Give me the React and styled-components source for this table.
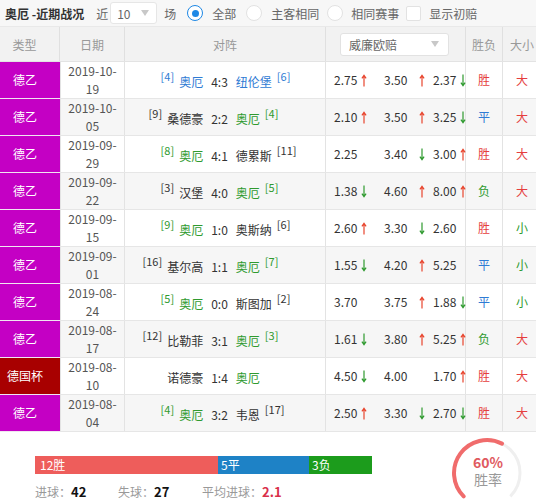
import React from 'react';
import styled, { createGlobalStyle } from 'styled-components';

const Global = createGlobalStyle`
  html, body { margin: 0; padding: 0; background: #fff; overflow: hidden; }
  body {
    font-family: "Noto Sans CJK SC", "Microsoft YaHei", sans-serif;
    font-size: 12px;
    color: #333;
  }
`;

const COLS = '60px 65px 201px 140px 37px 39px';

const Page = styled.div`
  width: 536px;
  height: 501px;
  overflow: hidden;
`;

const TopBar = styled.div`
  height: 27px;
  box-sizing: border-box;
  display: flex;
  align-items: center;
  padding-left: 5px;
  background: #f7f7f7;
  border-bottom: 1px solid #e9e9e9;
  white-space: nowrap;
`;

const Title = styled.span`
  font-weight: bold;
  color: #333;
  margin-right: 12px;
`;

const Plain = styled.span`
  color: #666;
`;

const MiniSelect = styled.div`
  width: 47px;
  height: 22px;
  box-sizing: border-box;
  margin: 0 7px 0 2px;
  border: 1px solid #e6e6e6;
  border-radius: 3px;
  background: #fff;
  display: flex;
  align-items: center;
  justify-content: space-between;
  padding: 0 7px 0 6px;
  color: #666;
`;

const Caret = styled.span`
  width: 0;
  height: 0;
  border-left: 4px solid transparent;
  border-right: 4px solid transparent;
  border-top: 6px solid #c8c8c8;
`;

const Option = styled.label`
  display: flex;
  align-items: center;
  gap: ${p => p.$gap || 9}px;
  margin-left: ${p => p.$ml || 10}px;
  color: #666;
`;

const Radio = styled.span`
  width: 16px;
  height: 16px;
  box-sizing: border-box;
  border-radius: 50%;
  border: 1px solid ${p => (p.$on ? '#1e88e5' : '#e2e2e2')};
  background: #fff;
  display: flex;
  align-items: center;
  justify-content: center;
  &::after {
    content: '';
    width: 7px;
    height: 7px;
    border-radius: 50%;
    background: ${p => (p.$on ? '#1e88e5' : 'transparent')};
  }
`;

const Check = styled.span`
  width: 15px;
  height: 15px;
  box-sizing: border-box;
  border: 1px solid #e2e2e2;
  border-radius: 2px;
  background: #fff;
`;

const HeadRow = styled.div`
  display: grid;
  grid-template-columns: ${COLS};
  height: 35px;
  box-sizing: border-box;
  background: #f2f2f2;
  border-bottom: 1px solid #e3e3e3;
`;

const HeadCell = styled.div`
  display: flex;
  align-items: center;
  justify-content: ${p => (p.$start ? 'flex-start' : 'center')};
  padding: 0 ${p => p.$pr || 0}px 0 ${p => p.$pl || 0}px;
  border-right: 1px solid #e0e0e0;
  color: #999;
`;

const OddsSelect = styled.div`
  width: 109px;
  height: 23px;
  box-sizing: border-box;
  border: 1px solid #e2e2e2;
  border-radius: 3px;
  background: #fff;
  display: flex;
  align-items: center;
  justify-content: space-between;
  padding: 0 9px 0 8px;
  color: #666;
`;

const Row = styled.div`
  display: grid;
  grid-template-columns: ${COLS};
  height: 37px;
  box-sizing: border-box;
  border-bottom: 1px solid #e6e6e6;
  background: ${p => (p.$alt ? '#f6f6f6' : '#fff')};
`;

const Cell = styled.div`
  display: flex;
  align-items: center;
  justify-content: center;
  border-right: 1px solid #e3e3e3;
  line-height: 18px;
`;

const TypeCell = styled(Cell)`
  background: ${p => p.$bg};
  color: #fff;
  border-right: none;
  padding-right: 10px;
  margin-bottom: -1px;
  border-bottom: 1px solid #f0e6f0;
`;

const DateCell = styled(Cell)`
  flex-direction: column;
  color: #555;
  border-left: 1px solid #e3e3e3;
`;

const MatchCell = styled(Cell)`
  display: grid;
  grid-template-columns: 1fr auto 1fr;
  align-items: center;
  padding-right: 11px;
`;

const Side = styled.div`
  display: flex;
  align-items: center;
  justify-content: ${p => (p.$home ? 'flex-end' : 'flex-start')};
  white-space: nowrap;
  padding-top: 3px;
`;

const Team = styled.span`
  color: ${p => p.$c};
`;

const Rank = styled.sup`
  font-size: 11px;
  line-height: 11px;
  color: ${p => p.$c};
  position: relative;
  top: -5px;
  vertical-align: baseline;
  margin: ${p => (p.$home ? '0 5px 0 0' : '0 0 0 5px')};
`;

const Score = styled.span`
  padding: 3px 8px 0;
  color: #333;
`;

const OddsCell = styled(Cell)`
  display: grid;
  grid-template-columns: 50px 49px auto;
  justify-content: start;
  padding-left: 8px;
`;

const Odd = styled.span`
  display: flex;
  align-items: center;
  color: #333;
`;

const ArrowSvg = styled.svg`
  margin-left: ${p => p.$ml}px;
  stroke: ${p => (p.$dir === 'up' ? '#e8452e' : '#2f9a2f')};
  fill: none;
  stroke-width: 1.2;
`;

const ResultCell = styled(Cell)`
  color: ${p => p.$c};
`;

const Summary = styled.div`
  display: flex;
  justify-content: space-between;
  height: 69px;
`;

const SummaryLeft = styled.div`
  padding: 24px 0 0 35px;
`;

const Bar = styled.div`
  display: flex;
  height: 18px;
`;

const Seg = styled.div`
  background: ${p => p.$bg};
  color: #fff;
  line-height: 18px;
  padding-left: ${p => p.$pl}px;
  box-sizing: border-box;
  white-space: nowrap;
`;

const Stats = styled.div`
  display: flex;
  margin-top: 9px;
  line-height: 18px;
  white-space: nowrap;
`;

const Stat = styled.span`
  color: #999;
  width: ${p => p.$w}px;
  & b {
    font-size: 13px;
    color: ${p => p.$c || '#111'};
    font-weight: bold;
  }
`;

const Gauge = styled.div`
  display: grid;
  width: 72px;
  height: 72px;
  margin: 5px 13px 0 0;
  & > * {
    grid-area: 1 / 1;
  }
`;

const GaugeText = styled.div`
  display: flex;
  flex-direction: column;
  align-items: center;
  justify-content: center;
  padding: 0 0 4px 2px;
`;

const Pct = styled.span`
  color: #e05a5f;
  font-size: 14px;
  line-height: 17px;
  font-weight: bold;
`;

const PctLabel = styled.span`
  color: #999;
  font-size: 14px;
  line-height: 17px;
`;

const GREEN = '#2f9a2f';
const BLUE = '#2f7bd4';
const RED = '#e53e3e';

const rows = [
  { t: '德乙', d: '2019-10-19', h: '奥厄', hr: 4, s: '4:3', a: '纽伦堡', ar: 6, o: [['2.75', 'up'], ['3.50', 'up'], ['2.37', 'down']], r: '胜', b: '大', hot: true },
  { t: '德乙', d: '2019-10-05', h: '桑德豪', hr: 9, s: '2:2', a: '奥厄', ar: 4, o: [['2.10', 'up'], ['3.50', 'up'], ['3.25', 'down']], r: '平', b: '大' },
  { t: '德乙', d: '2019-09-29', h: '奥厄', hr: 8, s: '4:1', a: '德累斯', ar: 11, o: [['2.25'], ['3.40', 'down'], ['3.00', 'up']], r: '胜', b: '大' },
  { t: '德乙', d: '2019-09-22', h: '汉堡', hr: 3, s: '4:0', a: '奥厄', ar: 5, o: [['1.38', 'down'], ['4.60', 'up'], ['8.00', 'up']], r: '负', b: '大' },
  { t: '德乙', d: '2019-09-15', h: '奥厄', hr: 9, s: '1:0', a: '奥斯纳', ar: 6, o: [['2.60', 'up'], ['3.30', 'down'], ['2.60']], r: '胜', b: '小' },
  { t: '德乙', d: '2019-09-01', h: '基尔高', hr: 16, s: '1:1', a: '奥厄', ar: 7, o: [['1.55', 'down'], ['4.20', 'up'], ['5.25']], r: '平', b: '小' },
  { t: '德乙', d: '2019-08-24', h: '奥厄', hr: 5, s: '0:0', a: '斯图加', ar: 2, o: [['3.70'], ['3.75', 'up'], ['1.88', 'down']], r: '平', b: '小' },
  { t: '德乙', d: '2019-08-17', h: '比勒菲', hr: 12, s: '3:1', a: '奥厄', ar: 3, o: [['1.61', 'down'], ['3.80', 'up'], ['5.25', 'up']], r: '负', b: '大' },
  { t: '德国杯', d: '2019-08-10', h: '诺德豪', s: '1:4', a: '奥厄', o: [['4.50', 'down'], ['4.00'], ['1.70', 'up']], r: '胜', b: '大', cup: true },
  { t: '德乙', d: '2019-08-04', h: '奥厄', hr: 4, s: '3:2', a: '韦恩', ar: 17, o: [['2.50', 'up'], ['3.30', 'down'], ['2.70', 'down']], r: '胜', b: '大' },
];

const resColor = { 胜: RED, 平: BLUE, 负: GREEN, 大: RED, 小: GREEN };

function Arrow({ dir, ml }) {
  return (
    <ArrowSvg $dir={dir} $ml={ml} width="6" height="13" viewBox="0 0 6 13">
      {dir === 'up' ? (
        <path d="M3 12.5V1.5M0.9 4.3L3 1.3L5.1 4.3" />
      ) : (
        <path d="M3 0.5V11.5M0.9 8.7L3 11.7L5.1 8.7" />
      )}
    </ArrowSvg>
  );
}

function teamColor(name, hot) {
  if (hot) return BLUE;
  return name === '奥厄' ? GREEN : '#333';
}

function MatchRow({ m, alt }) {
  return (
    <Row $alt={alt}>
      <TypeCell $bg={m.cup ? '#a80000' : '#c400c4'}>{m.t}</TypeCell>
      <DateCell>
        <span>{m.d.slice(0, 8)}</span>
        <span>{m.d.slice(8)}</span>
      </DateCell>
      <MatchCell>
        <Side $home>
          {m.hr && <Rank $home $c={teamColor(m.h, m.hot)}>[{m.hr}]</Rank>}
          <Team $c={teamColor(m.h, m.hot)}>{m.h}</Team>
        </Side>
        <Score>{m.s}</Score>
        <Side>
          <Team $c={teamColor(m.a, m.hot)}>{m.a}</Team>
          {m.ar && <Rank $c={teamColor(m.a, m.hot)}>[{m.ar}]</Rank>}
        </Side>
      </MatchCell>
      <OddsCell>
        {m.o.map(([v, dir], i) => (
          <Odd key={i}>
            {v}
            {dir && <Arrow dir={dir} ml={i === 1 ? 12 : 4} />}
          </Odd>
        ))}
      </OddsCell>
      <ResultCell $c={resColor[m.r]}>{m.r}</ResultCell>
      <ResultCell $c={resColor[m.b]}>{m.b}</ResultCell>
    </Row>
  );
}

export default function App() {
  return (
    <Page>
      <Global />
      <TopBar>
        <Title>奥厄 -近期战况</Title>
        <Plain>近</Plain>
        <MiniSelect>
          10
          <Caret />
        </MiniSelect>
        <Plain>场</Plain>
        <Option $ml={11}>
          <Radio $on />
          全部
        </Option>
        <Option>
          <Radio />
          主客相同
        </Option>
        <Option $ml={8} $gap={8}>
          <Radio />
          相同赛事
        </Option>
        <Option $ml={7} $gap={8}>
          <Check />
          显示初赔
        </Option>
      </TopBar>
      <HeadRow>
        <HeadCell $pr={10}>类型</HeadCell>
        <HeadCell>日期</HeadCell>
        <HeadCell>对阵</HeadCell>
        <HeadCell $start $pl={14}>
          <OddsSelect>
            威廉欧赔
            <Caret />
          </OddsSelect>
        </HeadCell>
        <HeadCell>胜负</HeadCell>
        <HeadCell>大小</HeadCell>
      </HeadRow>
      {rows.map((m, i) => (
        <MatchRow key={i} m={m} alt={i % 2 === 1} />
      ))}
      <Summary>
        <SummaryLeft>
          <Bar>
            <Seg $bg="#ee5d5b" $pl={5} style={{ width: 183 }}>12胜</Seg>
            <Seg $bg="#1e82c6" $pl={3} style={{ width: 91 }}>5平</Seg>
            <Seg $bg="#1c9c1c" $pl={3} style={{ width: 63 }}>3负</Seg>
          </Bar>
          <Stats>
            <Stat $w={83}>进球：<b>42</b></Stat>
            <Stat $w={84}>失球：<b>27</b></Stat>
            <Stat $c="#d9304a">平均进球：<b>2.1</b></Stat>
          </Stats>
        </SummaryLeft>
        <Gauge>
          <svg width="72" height="72" viewBox="0 0 72 72">
            <path d="M12.67 59.33 A33 33 0 1 1 59.33 59.33" fill="none" stroke="#efefef" strokeWidth="3" />
            <path d="M12.67 59.33 A33 33 0 0 1 50.98 6.6" fill="none" stroke="#f06c6c" strokeWidth="4" strokeLinecap="round" />
          </svg>
          <GaugeText>
            <Pct>60%</Pct>
            <PctLabel>胜率</PctLabel>
          </GaugeText>
        </Gauge>
      </Summary>
    </Page>
  );
}
